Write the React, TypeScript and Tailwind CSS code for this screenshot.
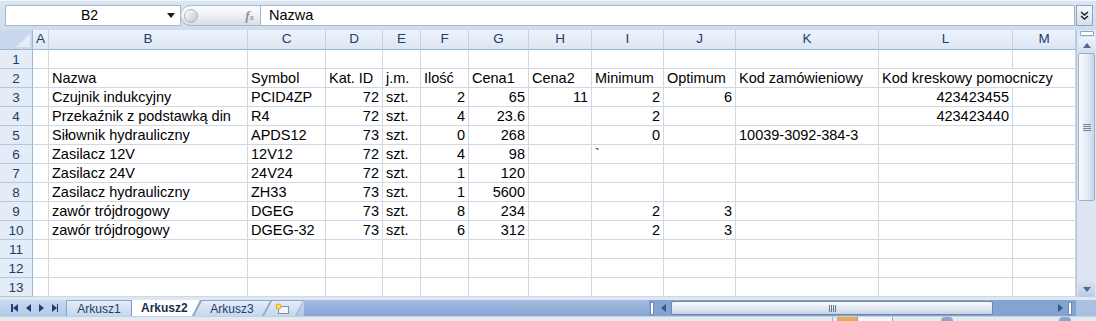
import React from 'react';

const W = ['w-[16px]', 'w-[199px]', 'w-[78px]', 'w-[57px]', 'w-[38px]', 'w-[48px]', 'w-[60px]', 'w-[63px]', 'w-[72px]', 'w-[72px]', 'w-[143px]', 'w-[134px]', 'w-[63px]'];
const LETTERS = ['A', 'B', 'C', 'D', 'E', 'F', 'G', 'H', 'I', 'J', 'K', 'L', 'M'];

type V = string | number | null | undefined;
const rows: V[][] = [
  [],
  [null, 'Nazwa', 'Symbol', 'Kat. ID', 'j.m.', 'Ilość', 'Cena1', 'Cena2', 'Minimum', 'Optimum', 'Kod zamówieniowy', 'Kod kreskowy pomocniczy'],
  [null, 'Czujnik indukcyjny', 'PCID4ZP', 72, 'szt.', 2, 65, 11, 2, 6, null, 423423455],
  [null, 'Przekaźnik z podstawką din', 'R4', 72, 'szt.', 4, 23.6, null, 2, null, null, 423423440],
  [null, 'Siłownik hydrauliczny', 'APDS12', 73, 'szt.', 0, 268, null, 0, null, '10039-3092-384-3'],
  [null, 'Zasilacz 12V', '12V12', 72, 'szt.', 4, 98, null, '`'],
  [null, 'Zasilacz 24V', '24V24', 72, 'szt.', 1, 120],
  [null, 'Zasilacz hydrauliczny', 'ZH33', 73, 'szt.', 1, 5600],
  [null, 'zawór trójdrogowy', 'DGEG', 73, 'szt.', 8, 234, null, 2, 3],
  [null, 'zawór trójdrogowy', 'DGEG-32', 73, 'szt.', 6, 312, null, 2, 3],
  [],
  [],
  [],
];

function Cell({ v, w, spill }: { v: V; w: string; spill: boolean }) {
  const num = typeof v === 'number';
  return (
    <div
      className={`${w} h-full shrink-0 border-b border-[#d0d7e5] flex items-end pb-[1px] px-[3px] whitespace-nowrap text-[14.5px] leading-[15px] ${
        spill ? 'overflow-visible' : 'overflow-hidden border-r'
      } ${num ? 'justify-end' : 'justify-start'}`}
    >
      {v === null || v === undefined ? '' : String(v)}
    </div>
  );
}

function Tri({ dir, color = '#1f3f70' }: { dir: 'l' | 'r' | 'u' | 'd'; color?: string }) {
  const pts = { l: '5,0 5,8 0,4', r: '0,0 0,8 5,4', u: '0,5 8,5 4,0', d: '0,0 8,0 4,5' }[dir];
  const w = dir === 'l' || dir === 'r' ? 5 : 8;
  const h = dir === 'l' || dir === 'r' ? 8 : 5;
  return (
    <svg width={w} height={h} viewBox={`0 0 ${w} ${h}`}>
      <polygon points={pts} fill={color} />
    </svg>
  );
}

export default function App() {
  return (
    <div className="w-[1096px] h-[321px] overflow-hidden bg-[#cfdcee] font-['Liberation_Sans',Arial,sans-serif] text-[13px] text-black flex flex-col">
      {/* Formula bar */}
      <div className="h-[30px] shrink-0 flex pt-[4px] pl-[5px] pr-[3px] bg-gradient-to-b from-[#dbe6f4] to-[#cedcef] border-t border-[#f2f6fb]">
        <div className="h-[21px] w-[176px] bg-white border border-[#a7b8cd] flex items-center">
          <span className="flex-1 text-center pl-[6px] text-[14px]">B2</span>
          <span className="mr-[5px] flex items-center">
            <Tri dir="d" color="#1a1a1a" />
          </span>
        </div>
        <div className="h-[21px] w-[81px] -ml-[1px] flex items-center rounded-l-full border border-[#a7b8cd] bg-gradient-to-b from-[#fdfdfe] via-[#eef1f5] to-[#d7dee8]">
          <div className="ml-[3px] w-[14px] h-[14px] rounded-full border border-[#a9b4c2] bg-gradient-to-br from-[#ffffff] to-[#bcc6d2]" />
          <span className="ml-auto mr-[6px] font-['Liberation_Serif',serif] italic font-bold text-[13px] text-[#8a929c] leading-none">
            f<span className="text-[9px]">x</span>
          </span>
        </div>
        <div className="h-[21px] flex-1 -ml-[1px] bg-white border border-[#a7b8cd] flex items-center pl-[8px] text-[14.5px]">Nazwa</div>
        <div className="h-[21px] w-[17px] ml-[1px] border border-[#8ea6c6] bg-gradient-to-b from-[#f4f7fb] to-[#d6e1ef] flex items-center justify-center">
          <svg width="9" height="9" viewBox="0 0 9 9">
            <polyline points="1,1 4.5,4 8,1" fill="none" stroke="#1a1a1a" strokeWidth="1.4" />
            <polyline points="1,5 4.5,8 8,5" fill="none" stroke="#1a1a1a" strokeWidth="1.4" />
          </svg>
        </div>
      </div>

      {/* Grid + vertical scrollbar */}
      <div className="h-[267px] shrink-0 flex">
        <div className="w-[1076px] shrink-0 bg-white flex flex-col">
          {/* header row */}
          <div className="h-[20px] flex shrink-0">
            <div className="w-[33px] h-full shrink-0 bg-[#c9d8ed] border-r border-b border-[#9eb6ce] relative">
              <svg className="absolute right-[2px] bottom-[2px]" width="14" height="13" viewBox="0 0 14 13">
                <polygon points="14,0 14,13 0,13" fill="#e6edf7" />
              </svg>
            </div>
            {LETTERS.map((l, i) => (
              <div
                key={l}
                className={`${W[i]} h-full shrink-0 flex items-center justify-center bg-gradient-to-b from-[#eef3fa] to-[#dce6f4] border-r border-r-[#c2d1e3] border-b border-b-[#9eb6ce] text-[#1f3d66] text-[13.5px]`}
              >
                {l}
              </div>
            ))}
          </div>
          {rows.map((r, ri) => (
            <div key={ri} className="h-[19px] flex shrink-0">
              <div className="w-[33px] h-full shrink-0 bg-[#e4ecf7] border-r border-r-[#9eb6ce] border-b border-b-[#b5c7dc] flex items-center justify-center text-[#1f3d66] text-[13.5px] leading-[15px]">
                {ri + 1}
              </div>
              {LETTERS.map((_, ci) => (
                <Cell key={ci} v={r[ci]} w={W[ci]} spill={ri === 1 && ci === 11} />
              ))}
            </div>
          ))}
        </div>
        {/* vertical scrollbar */}
        <div className="w-[20px] shrink-0 flex flex-col bg-[#dce5f1] border-l border-[#b3c5dc]">
          <div className="h-[7px] shrink-0 flex items-center justify-center">
            <div className="w-[14px] h-[5px] bg-white border border-[#8ea6c6] rounded-[1px]" />
          </div>
          <div className="h-[16px] shrink-0 mx-[1px] flex items-center justify-center bg-gradient-to-b from-[#eef3fa] to-[#d3dfee]">
            <Tri dir="u" color="#4e6a90" />
          </div>
          <div className="h-[148px] shrink-0 mx-[1px] rounded-[2px] border border-[#98afcf] bg-gradient-to-r from-[#fafbfd] via-[#e6edf6] to-[#c8d6e9] flex items-center justify-center">
            <div className="flex flex-col gap-[1px]">
              <div className="w-[8px] h-[1px] bg-[#6c84a6]" />
              <div className="w-[8px] h-[1px] bg-[#6c84a6]" />
              <div className="w-[8px] h-[1px] bg-[#6c84a6]" />
              <div className="w-[8px] h-[1px] bg-[#6c84a6]" />
            </div>
          </div>
          <div className="flex-1" />
          <div className="h-[16px] shrink-0 mx-[1px] flex items-center justify-center bg-gradient-to-b from-[#dbe5f2] to-[#b9cbe3]">
            <Tri dir="d" color="#4e6a90" />
          </div>
        </div>
      </div>

      {/* tab bar */}
      <div className="h-[3px] shrink-0 bg-[#dfe7f2]" />
      <div className="h-[16px] shrink-0 flex bg-[#84a3d2]">
        <div className="w-[649px] shrink-0 flex bg-gradient-to-b from-[#c9d9f0] to-[#b3c9e8]">
          <div className="w-[66px] shrink-0 flex items-center gap-[8px] pl-[11px]">
            <span className="flex items-center">
              <span className="w-[1.5px] h-[8px] bg-[#1f3f70]" />
              <Tri dir="l" />
            </span>
            <Tri dir="l" />
            <Tri dir="r" />
            <span className="flex items-center">
              <Tri dir="r" />
              <span className="w-[1.5px] h-[8px] bg-[#1f3f70]" />
            </span>
          </div>
          <div className="flex items-stretch">
            <div className="w-[66px] shrink-0 border border-b-0 border-[#8aa5ca] bg-gradient-to-b from-[#e4ecf7] to-[#c6d7ee] flex items-center justify-center text-[12px] text-[#1f3d66]">
              Arkusz1
            </div>
            <div className="w-[70px] -ml-[1px] shrink-0 bg-[#7f9bc3] pl-[1px] [clip-path:polygon(0_0,100%_0,calc(100%_-_8px)_100%,0_100%)] z-10">
              <div className="h-full bg-white [clip-path:polygon(0_0,calc(100%_-_1px)_0,calc(100%_-_9px)_100%,0_100%)] flex items-center pl-[9px] text-[12px] font-bold text-[#1a2f4f]">
                Arkusz2
              </div>
            </div>
            <div className="w-[78px] -ml-[8px] shrink-0 bg-[#8aa5ca] pt-[1px] [clip-path:polygon(8px_0,100%_0,calc(100%_-_8px)_100%,0_100%)]">
              <div className="h-full bg-gradient-to-b from-[#e4ecf7] to-[#c6d7ee] [clip-path:polygon(9px_0,calc(100%_-_1px)_0,calc(100%_-_9px)_100%,1px_100%)] flex items-center justify-center text-[12px] text-[#1f3d66]">
                Arkusz3
              </div>
            </div>
            <div className="w-[41px] -ml-[8px] shrink-0 bg-[#8aa5ca] pt-[1px] [clip-path:polygon(8px_0,100%_0,calc(100%_-_8px)_100%,0_100%)]">
              <div className="h-full bg-gradient-to-b from-[#e4ecf7] to-[#c6d7ee] [clip-path:polygon(9px_0,calc(100%_-_1px)_0,calc(100%_-_9px)_100%,1px_100%)] flex items-center pl-[12px]">
                <svg width="14" height="12" viewBox="0 0 14 12">
                  <rect x="3.5" y="3.5" width="10" height="7" fill="#f3f6fa" stroke="#7e8fa6" />
                  <circle cx="3.5" cy="3.5" r="3" fill="#f5b324" />
                  <circle cx="3.5" cy="3.5" r="1.3" fill="#fff3c4" />
                </svg>
              </div>
            </div>
          </div>
          <div className="flex-1 bg-gradient-to-b from-[#a3bce2] to-[#87a5d3]" />
        </div>
        {/* horizontal scrollbar */}
        <div className="w-[427px] shrink-0 flex items-center bg-[#84a3d2]">
          <div className="w-[6px] h-full shrink-0 flex items-center justify-center">
            <div className="w-[4px] h-[13px] bg-white border border-[#6f88ad]" />
          </div>
          <div className="w-[16px] h-full shrink-0 flex items-center justify-center">
            <Tri dir="l" color="#3d5680" />
          </div>
          <div className="w-[322px] h-[14px] shrink-0 rounded-[2px] border border-[#6e87ad] bg-gradient-to-b from-[#fbfcfd] via-[#e3e9f1] to-[#c9d3e0] flex items-center justify-center gap-[1px]">
            <div className="w-[1px] h-[7px] bg-[#5f7699]" />
            <div className="w-[1px] h-[7px] bg-[#5f7699]" />
            <div className="w-[1px] h-[7px] bg-[#5f7699]" />
            <div className="w-[1px] h-[7px] bg-[#5f7699]" />
          </div>
          <div className="flex-1" />
          <div className="w-[16px] h-full shrink-0 flex items-center justify-center">
            <Tri dir="r" color="#3d5680" />
          </div>
          <div className="w-[8px] h-full shrink-0 flex items-center justify-start">
            <div className="w-[4px] h-[13px] bg-white border border-[#6f88ad]" />
          </div>
        </div>
        <div className="w-[20px] shrink-0 bg-[#a9c0e2]" />
      </div>
      {/* status bar strip */}
      <div className="flex-1 bg-[#e4eaf2] border-t border-[#c3d0e0] flex items-start">
        <div className="ml-[832px] w-[1px] h-full bg-[#9fb1c8]" />
        <div className="ml-[4px] w-[20px] h-full bg-[#e6a95a]" />
        <div className="w-[36px] h-full border-x border-[#8ea6c6] bg-[#f2f5f9]" />
        <div className="ml-[48px] w-[12px] h-full rounded-t-full bg-[#8ea6c6]" />
        <div className="ml-[106px] w-[12px] h-full rounded-t-full bg-[#8ea6c6]" />
      </div>
    </div>
  );
}
